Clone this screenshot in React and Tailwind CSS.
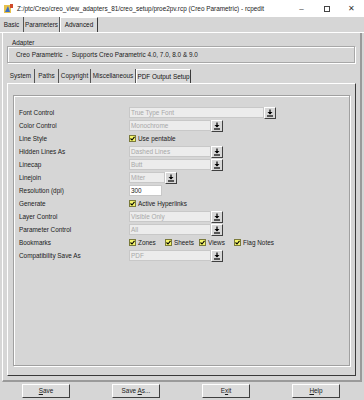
import React from 'react';

const font = { fontFamily: '"Liberation Sans", Arial, sans-serif' };

const DropBtn = () => (
  <div className="w-[12px] h-[12px] bg-[#d8d8d8] border border-t-white border-l-white border-r-[#404040] border-b-[#404040] flex items-center justify-center">
    <svg width="8" height="8" viewBox="0 0 8 8">
      <path d="M4 0.5V5" stroke="#000" strokeWidth="1.2" />
      <path d="M1.5 3L4 5.5L6.5 3Z" fill="#000" />
      <path d="M1 7H7" stroke="#000" strokeWidth="1.2" />
    </svg>
  </div>
);

const Select = ({ value, wide }) => (
  <div className="flex items-center">
    <div className={`h-[11px] bg-[#ececec] border border-[#c8c8c8] text-[#a8a8a8] pl-[1px] leading-[9px] ${wide ? 'w-[135px]' : 'w-[82px]'}`}>{value}</div>
    <DropBtn />
  </div>
);

const Check = ({ label, w }) => (
  <div className={`flex items-center gap-[2px] ${w || ''}`}>
    <div className="w-[7px] h-[7px] bg-[#f4f46a] border border-[#7a7a3a] flex items-center justify-center">
      <svg width="5" height="5" viewBox="0 0 5 5">
        <path d="M0.5 2.5L2 4L4.5 0.8" stroke="#000" strokeWidth="1.1" fill="none" />
      </svg>
    </div>
    <span className="text-[#1a1a1a]">{label}</span>
  </div>
);

const Row = ({ label, children }) => (
  <div className="flex items-center h-[13px]">
    <div className="w-[110px] text-[#1a1a1a]">{label}</div>
    {children}
  </div>
);

const Tab = ({ label, active, w }) => (
  <div
    className={`h-full flex items-center justify-center ${w} ${
      active
        ? 'bg-[#dadada] border-t border-l border-t-white border-l-white border-r border-r-[#3a3a3a] -mb-[1px] relative z-10'
        : 'border-r border-r-[#555] text-[#1a1a1a]'
    }`}
  >
    {label}
  </div>
);

const Button = ({ children }) => (
  <div className="w-[48px] h-[14px] bg-[#dcdcdc] border border-t-white border-l-white border-r-[#404040] border-b-[#404040] flex items-center justify-center text-[#1a1a1a]">
    {children}
  </div>
);

export default function App() {
  return (
    <div className="w-[364px] h-[400px] bg-[#d6d6d6] flex flex-col overflow-hidden text-[6.4px] text-[#111]" style={font}>
      {/* title bar */}
      <div className="h-[17px] bg-white flex items-center shrink-0">
        <svg className="ml-[4px]" width="9" height="10" viewBox="0 0 9 10">
          <rect x="0" y="1" width="7" height="8" fill="#e8c24a" />
          <path d="M1 8L4 2L6 8Z" fill="#3a6fc4" />
          <rect x="6" y="0" width="3" height="4" fill="#d04a2a" />
        </svg>
        <span className="ml-[4px] text-[#222]">Z:/ptc/Creo/creo_view_adapters_81/creo_setup/proe2pv.rcp (Creo Parametric) - rcpedit</span>
        <div className="ml-auto flex items-center text-[#333]">
          <span className="w-[25px] text-center text-[8px] leading-none">&#8211;</span>
          <span className="w-[25px] flex justify-center"><span className="w-[6px] h-[6px] border border-[#444]"></span></span>
          <span className="w-[25px] text-center text-[8px] leading-none">&#10005;</span>
        </div>
      </div>

      {/* top tabs */}
      <div className="h-[16px] flex shrink-0 border-b border-b-white">
        <Tab label="Basic" w="w-[24px]" />
        <Tab label="Parameters" w="w-[36px]" />
        <Tab label="Advanced" w="w-[38px]" active />
      </div>

      {/* advanced panel */}
      <div className="mx-[2px] h-[349px] flex flex-col px-[4px] border-l border-l-white border-r-2 border-r-[#9a9a9a] border-b-2 border-b-[#9a9a9a] shrink-0">
        <div className="mt-[6px] ml-[5px] text-[#1a1a1a] leading-[7px]">Adapter</div>
        <div className="h-[17px] border border-[#a8a8a8] shadow-[inset_1px_1px_0_#fff,1px_1px_0_#fff] flex items-center pl-[8px] text-[#1a1a1a] mr-[1px]">
          Creo Parametric&nbsp; - &nbsp;Supports Creo Parametric 4.0, 7.0, 8.0 &amp; 9.0
        </div>

        {/* inner tabs */}
        <div className="mt-[6px] h-[14px] flex shrink-0">
          <Tab label="System" w="w-[28px]" />
          <Tab label="Paths" w="w-[24px]" />
          <Tab label="Copyright" w="w-[32px]" />
          <Tab label="Miscellaneous" w="w-[45px]" />
          <Tab label="PDF Output Setup" w="w-[55px]" active />
        </div>

        <div className="flex-1 mb-[4px] border border-l-white border-t-white border-r-[#3a3a3a] border-b-[#3a3a3a] px-[5px] pt-[11px] pb-[9px] flex">
          <div className="flex-1 border border-[#a0a0a0] shadow-[inset_1px_1px_0_#fff,1px_1px_0_#fff] pt-[10px] pl-[5px]">
            <Row label="Font Control"><Select value="True Type Font" wide /></Row>
            <Row label="Color Control"><Select value="Monochrome" /></Row>
            <Row label="Line Style"><Check label="Use pentable" /></Row>
            <Row label="Hidden Lines As"><Select value="Dashed Lines" /></Row>
            <Row label="Linecap"><Select value="Butt" /></Row>
            <Row label="Linejoin">
              <div className="flex items-center">
                <div className="h-[11px] w-[36px] bg-[#ececec] border border-[#c8c8c8] text-[#a8a8a8] pl-[1px] leading-[9px]">Miter</div>
                <DropBtn />
              </div>
            </Row>
            <Row label="Resolution (dpi)">
              <div className="h-[11px] w-[33px] bg-white border border-[#c8c8c8] pl-[1px] leading-[9px] text-[#1a1a1a]">300</div>
            </Row>
            <Row label="Generate"><Check label="Active Hyperlinks" /></Row>
            <Row label="Layer Control"><Select value="Visible Only" /></Row>
            <Row label="Parameter Control"><Select value="All" /></Row>
            <Row label="Bookmarks">
              <div className="flex items-center">
                <Check label="Zones" w="w-[36px]" />
                <Check label="Sheets" w="w-[34px]" />
                <Check label="Views" w="w-[35px]" />
                <Check label="Flag Notes" />
              </div>
            </Row>
            <Row label="Compatibility Save As"><Select value="PDF" /></Row>
          </div>
        </div>
      </div>

      {/* buttons */}
      <div className="flex pl-[22px] gap-[42px] mt-[2px]">
        <Button><span><u>S</u>ave</span></Button>
        <Button><span>Save <u>A</u>s...</span></Button>
        <Button><span>E<u>x</u>it</span></Button>
        <Button><span><u>H</u>elp</span></Button>
      </div>
    </div>
  );
}
